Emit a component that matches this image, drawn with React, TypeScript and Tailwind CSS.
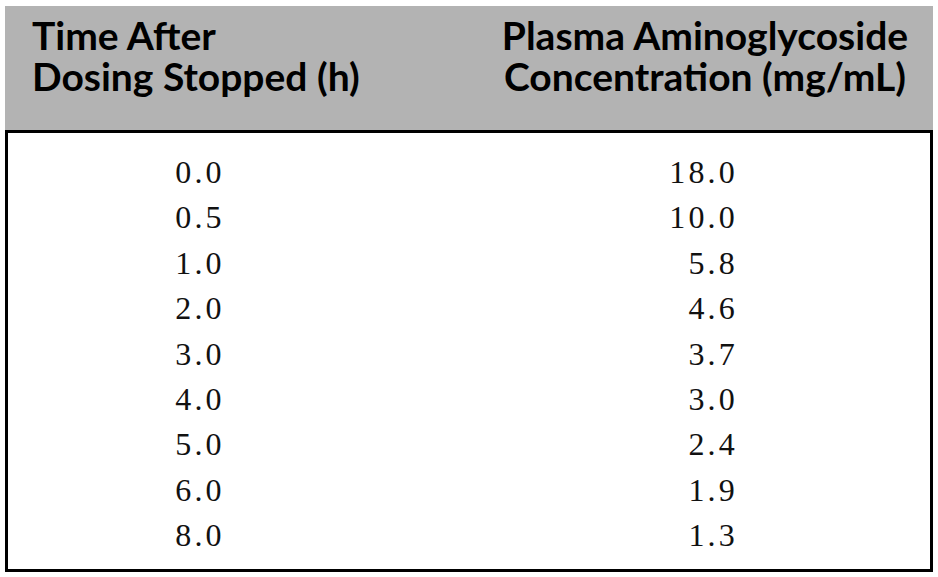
const rows: [string, string][] = [
  ['0.0', '18.0'],
  ['0.5', '10.0'],
  ['1.0', '5.8'],
  ['2.0', '4.6'],
  ['3.0', '3.7'],
  ['4.0', '3.0'],
  ['5.0', '2.4'],
  ['6.0', '1.9'],
  ['8.0', '1.3'],
]

export default function App() {
  return (
    <div className="w-[938px] h-[577px] bg-white pt-[6px] pl-[5px]">
      <div className="w-[928px]">
        {/* header */}
        <div
          className="grid grid-cols-[387px_1fr] bg-[#b3b3b3] h-[124px] pt-[9px] text-[39px] leading-[41px] font-bold text-black"
          style={{ fontFamily: 'Lato, "Open Sans", sans-serif' }}
        >
          <div className="pl-[27px]">
            <div>Time After</div>
            <div>Dosing Stopped (h)</div>
          </div>
          <div className="pl-[85px] text-center">
            <div>Plasma Aminoglycoside</div>
            <div>Concentration (mg/mL)</div>
          </div>
        </div>

        {/* body */}
        <div
          className="border-[3px] border-black pt-[17px] pb-[10px] text-[32px] leading-[45.4px] tracking-[0.1em] text-[#111]"
          style={{ fontFamily: '"Liberation Serif", "Times New Roman", serif' }}
        >
          {rows.map(([t, c]) => (
            <div key={t} className="grid grid-cols-[384px_1fr]">
              <div className="text-center">{t}</div>
              <div className="text-right pr-[192px]">{c}</div>
            </div>
          ))}
        </div>
      </div>
    </div>
  )
}
